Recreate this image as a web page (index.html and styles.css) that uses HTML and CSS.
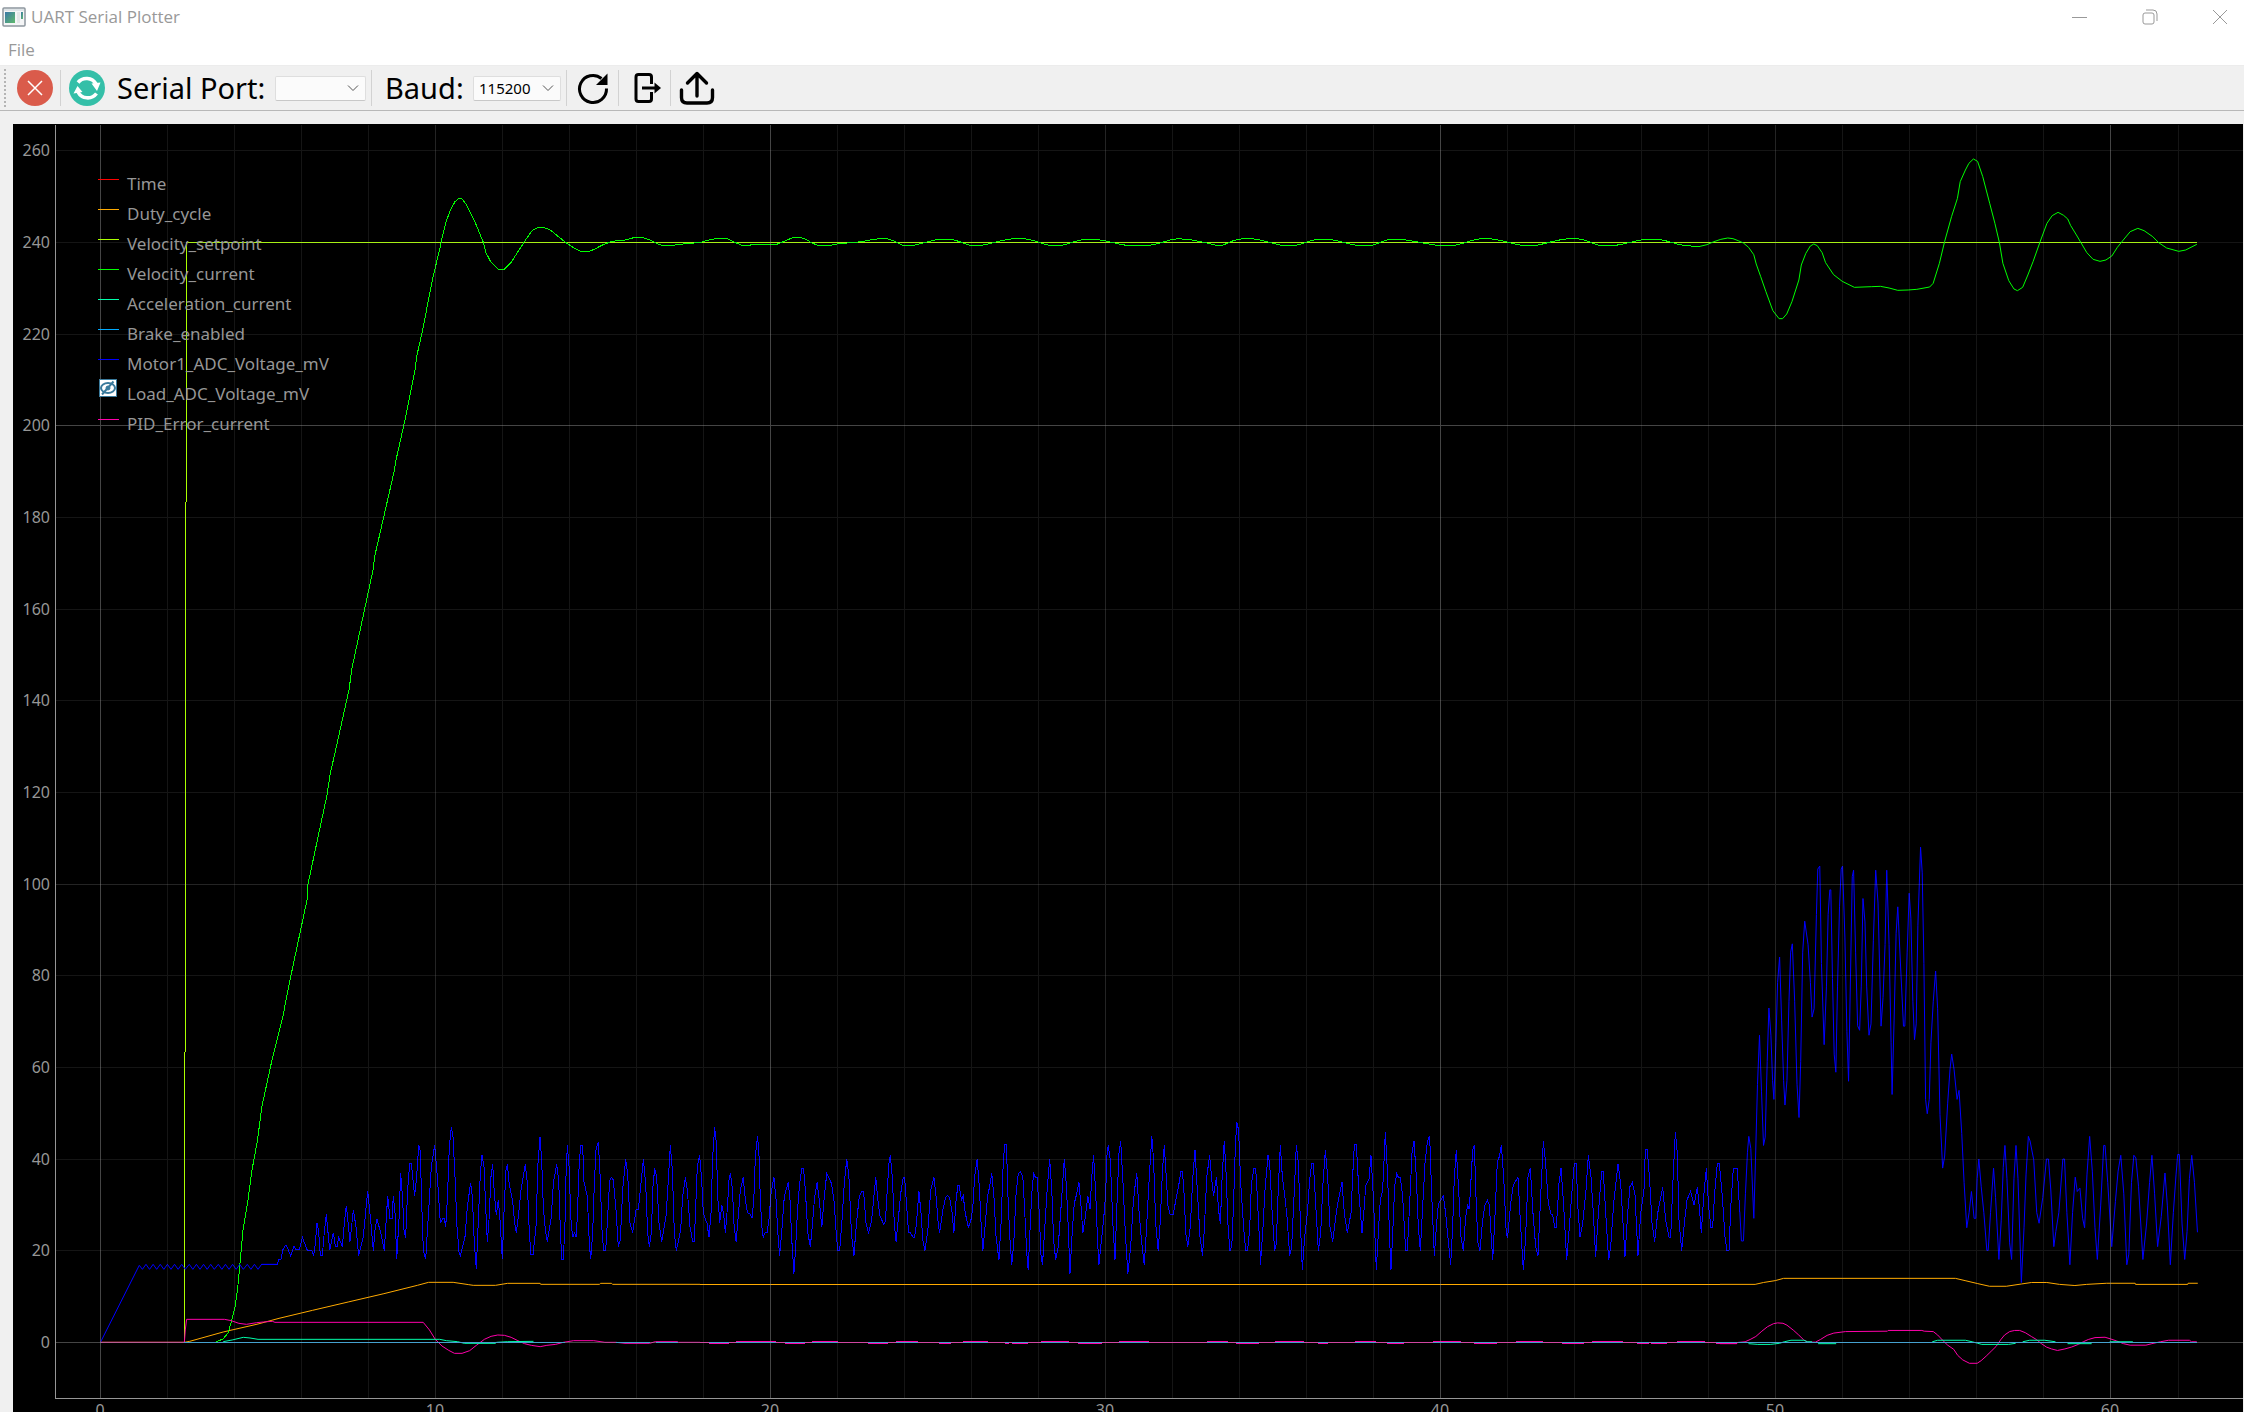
FILE: index.html
```html
<!DOCTYPE html>
<html lang="en">
<head>
<meta charset="utf-8">
<title>UART Serial Plotter</title>
<link rel="stylesheet" href="styles.css">
</head>
<body>
<header class="titlebar">
  <svg class="app-icon" width="24" height="20" viewBox="0 0 24 20" aria-hidden="true">
    <defs><linearGradient id="appfill" x1="0" y1="0" x2="1" y2="1"><stop offset="0" stop-color="#3b78a8"/><stop offset="1" stop-color="#5fba6c"/></linearGradient></defs>
    <rect x="1" y="1" width="22" height="18" rx="1" fill="#f4f5f6" stroke="#8d969e" stroke-width="1.5"/>
    <path d="M2 3h20" stroke="#c9d2d9"/>
    <rect x="3" y="5" width="10" height="11" fill="url(#appfill)"/>
    <rect x="15" y="5" width="3" height="11" fill="#e4e6e8"/>
    <rect x="19" y="5" width="2" height="7" fill="url(#appfill)"/>
  </svg>
  <h1 class="title">UART Serial Plotter</h1>
  <div class="window-controls">
    <button type="button" aria-label="Minimize"><svg width="16" height="16" viewBox="0 0 16 16"><path d="M0 8.5h15"/></svg></button>
    <button type="button" aria-label="Restore"><svg width="16" height="16" viewBox="0 0 16 16"><rect x="1" y="4" width="11" height="11" rx="2"/><path d="M4 1h7q4 0 4 4v7"/></svg></button>
    <button type="button" aria-label="Close"><svg width="16" height="16" viewBox="0 0 16 16"><path d="M1 1l14 14M15 1L1 15"/></svg></button>
  </div>
</header>
<nav class="menubar"><button type="button">File</button></nav>
<div class="toolbar" role="toolbar" aria-label="Connection">
  <span class="grip"></span>
  <button type="button" class="tool" aria-label="Disconnect">
    <svg width="36" height="36" viewBox="0 0 36 36"><circle cx="18" cy="18" r="18" fill="#da5b4b"/><path d="M11 11l14 14M25 11L11 25" stroke="#fff" stroke-width="1.5"/></svg>
  </button>
  <span class="sep"></span>
  <button type="button" class="tool" aria-label="Connect">
    <svg width="36" height="36" viewBox="0 0 36 36"><circle cx="18" cy="18" r="18" fill="#34bfa8"/>
      <path d="M9 12.500A11 11 0 0 1 27 14M27.500 23.500A11 11 0 0 1 9 22" fill="none" stroke="#fff" stroke-width="3.600"/>
      <path d="M22.500 13.500L31.500 12.500 28 21zM4.500 23.500L8.500 16 13.500 22z" fill="#fff"/></svg>
  </button>
  <label class="port-label" for="port">Serial Port:</label>
  <span class="combo port"><select id="port"><option></option></select><svg width="12" height="8" viewBox="0 0 12 8"><path d="M1 1.500l5 5 5-5"/></svg></span>
  <span class="sep near"></span>
  <label class="baud-label" for="baud">Baud:</label>
  <span class="combo baud"><select id="baud"><option>115200</option></select><svg width="12" height="8" viewBox="0 0 12 8"><path d="M1 1.500l5 5 5-5"/></svg></span>
  <span class="sep near"></span>
  <button type="button" class="tool" aria-label="Refresh">
    <svg width="36" height="36" viewBox="0 0 36 36"><path d="M26.500 8.500A13.500 13.500 0 1 0 31.500 18.500" fill="none" stroke="#000" stroke-width="3"/><path d="M32.500 3.500V15H21z" fill="#000"/></svg>
  </button>
  <span class="sep"></span>
  <button type="button" class="tool" aria-label="Export">
    <svg width="36" height="36" viewBox="0 0 36 36"><path d="M24.500 14V7q0-2.500-2.500-2.500H11.500Q9 4.500 9 7v22q0 2.500 2.500 2.500H22q2.500 0 2.500-2.500v-7" fill="none" stroke="#000" stroke-width="3"/><path d="M15 18h14" stroke="#000" stroke-width="3"/><path d="M27.500 12.500l6.500 5.500-6.500 5.500z" fill="#000"/></svg>
  </button>
  <span class="sep"></span>
  <button type="button" class="tool" aria-label="Upload">
    <svg width="36" height="36" viewBox="0 0 36 36"><g fill="none" stroke="#000" stroke-width="3.400" stroke-linecap="round" stroke-linejoin="round"><path d="M2.500 20v7.500q0 5.500 5.500 5.500h20q5.500 0 5.500-5.500V20"/><path d="M18 26V3.500M8.500 13L18 3.500 27.500 13"/></g></svg>
  </button>
</div>
<main class="plot">
<svg class="chart" viewBox="13 124 2230 1288" role="img" aria-label="Serial data plot">
  <g class="trace">
    <!-- Duty_cycle -->
    <g class="duty">
      <polyline transform="matrix(.44643 0 0 .33333 0 1140)" points="225,607 413,607 425,604 500,576 578,552 625,535 700,511 780,486 860,461 935,436 960,427 1015,427 1050,434 1060,436 1110,436 1137,430 1210,430 1211,433 1343,433 1345,430 1370,430 1372,433 1568,433"/>
      <path d="M700 1284.400H1720"/>
      <polyline transform="matrix(.33482 0 0 .37755 1720 820)" points="0,1230 105,1230 130,1225 165,1220 190,1214 703,1214 732,1220 770,1228 805,1235 855,1235 900,1229 930,1225 976,1225 1014,1230 1060,1233 1095,1230 1155,1227 1240,1227 1241,1230 1397,1230 1398,1227 1427,1227"/>
    </g>
    <!-- Velocity_setpoint -->
    <path class="setpoint" d="M100 1342.500H184.500L186.500 242.500H2197"/>
    <!-- Velocity_current -->
    <g class="velocity">
      <polyline points="100,1342.500 215,1342.500 218,1341 223,1339 228,1333 231,1323 235,1307 237.500,1290 240,1263 243,1230 248,1200 252,1170 257.500,1140 262,1106 272,1060 283,1016 286,1000 290,980 307,900 308,884 327,795 330,775 349,690 352,668 373,570 375,555 394,472 396,460 405,420 415,370 417,355 422,333 433,277 440,248"/>
      <polyline transform="matrix(.33333 0 0 .33333 420 180)" points="60,205 68,165 80,120 92,88 105,65 117,55 125,55 140,75 155,105 170,138 190,187 198,218 212,245 235,268 253,268 275,245 295,213 312,187 335,153 350,144 365,142 380,145 395,153 415,170 437,187 460,203 483,214 508,214 525,207 545,196 575,184 615,180 645,172 665,172 690,180 705,188 730,198 750,198 775,193 815,190 845,186 875,178 895,175 920,175 945,187 965,196 985,196 1005,193 1070,193 1095,183 1120,172 1140,172 1160,179 1175,189 1200,198 1220,198 1250,192 1290,188 1325,185 1360,178 1395,175"/>
      <path d="M885 238.500C895 239 898 246 908 246S930 239 945 239 965 246 976 246 1000 238.500 1019 238.500 1042 246 1055 246 1075 239 1090 239 1120 246 1134 246 1155 245 1170 240 1215 246 1220 246 1230 238.500 1247 238.500 1275 246 1289 246 1308 239 1323 239 1350 246 1365 246 1380 239 1395 239 1430 246 1447 246 1468 238.500 1485 238.500 1515 246 1529 246 1555 238.500 1573 238.500 1590 246 1607 246 1635 239 1652 239 1675 246 1691 246L1700 246"/>
      <polyline transform="matrix(.34694 0 0 .33333 1700 120)" points="0,379 20,374 40,365 60,358 80,354 95,356 110,362 125,369 140,382 155,404 162,432 175,470 190,515 210,572 228,596 238,596 250,582 265,545 285,480 292,435 305,400 318,378 328,372 338,377 352,398 362,428 385,464 410,484 445,502 495,500 520,499 545,504 570,511 600,510 625,508 662,501 672,490 690,430 705,365 725,290 742,235 750,185 765,150 775,130 788,117 800,124 815,170 835,250 850,310 863,368 873,430 890,482 905,507 915,512 930,502 945,465 960,425 980,366 1000,310 1015,287 1032,277 1048,286 1060,297 1068,316 1085,345 1098,368 1115,398 1133,418 1153,424 1170,420 1187,408 1203,382 1220,360 1240,335 1262,325 1280,332 1305,350 1322,368 1345,384 1380,394 1400,390 1432,373"/>
    </g>
    <!-- Motor1_ADC_Voltage_mV -->
    <g class="motor">
      <polyline transform="matrix(.44643 0 0 .33333 0 1140)" points="225,607 312,376 319,388 327,373 335,388 343,373 351,388 359,373 367,388 375,373 383,388 391,373 399,388 407,373 415,388 424,373 432,388 440,373 448,388 456,373 464,388 472,373 480,388 489,373 497,388 505,373 513,388 521,373 529,388 537,373 545,388 554,373 562,388 570,373 578,388 586,373 620,373"/>
      <polyline transform="matrix(.33333 0 0 .33333 260 1110)" points="3,463 52,463 57,448 63,448 68,420 75,408 80,408 92,437 102,408 108,420 118,420 127,382 142,421 155,421 161,437 166,400 171,340 176,365 181,437 187,437 193,365 199,313 209,421 220,368 226,410 231,410 236,382 247,410 253,340 259,287 270,395 280,300 288,350 296,437 310,380 323,243 331,320 340,422 345,360 351,327 362,368 373,422 378,340 383,258 390,326 396,326 400,258 406,320 410,448 417,330 422,190 428,270 432,360 437,383 443,240 449,160 454,160 459,210 464,257 470,200 476,106 480,120 484,230 488,380 492,430 497,448 503,350 514,170 524,106 532,200 541,340 548,325 553,325 557,352 562,270 568,110 574,52 579,80 585,200 591,350 597,425 601,437 615,380 622,290 632,218 637,260 643,400 649,478 655,330 661,190 666,136 672,170 677,290 682,395 687,330 693,200 698,163 703,250 709,315 715,270 720,330 727,448 733,280 738,180 742,163 748,225 758,272 764,340 769,368 775,320 783,240 796,163 802,220 808,370 813,435 819,435 828,350 834,160 840,80 845,150 850,290 856,360 862,395 874,320 880,220 890,163 896,210 900,330 905,448 910,448 915,340 918,200 922,106 928,180 932,320 938,382 944,368 949,382 953,290 958,150 963,106 968,106 972,215 982,260 988,400 992,448 998,370 1003,220 1008,120 1015,95 1020,190 1026,360 1031,422 1037,422 1043,320 1049,212 1054,202 1060,210 1068,300 1075,410 1081,390 1088,240 1097,148 1103,190 1110,340 1118,368 1128,300 1135,298 1141,240 1150,148 1157,220 1163,370 1168,410 1174,370 1179,230 1184,175 1190,200 1197,340 1205,395 1218,320 1225,210 1231,106 1237,180 1243,370 1249,422 1262,360 1268,260 1276,202 1282,240 1290,350 1298,395 1303,395 1308,270 1312,170 1319,136 1325,210 1330,310 1341,340 1347,382 1353,310 1358,140 1364,52 1369,100 1373,260 1380,340"/>
      <polyline transform="matrix(.35714 0 0 .33333 700 1080)" points="55,430 61,376 66,400 71,458 77,380 81,300 85,280 91,330 95,430 101,485 107,410 113,330 121,292 127,360 133,398 141,403 146,415 151,350 155,230 161,168 165,220 169,360 173,440 177,471 183,458 188,458 193,420 199,340 207,292 213,360 218,460 223,527 230,440 236,350 247,307 252,360 257,480 263,581 268,500 273,390 279,310 285,265 290,265 295,330 302,460 309,500 315,430 321,350 328,307 335,370 341,442 348,350 355,280 368,310 376,370 382,470 386,512 391,512 397,430 404,310 411,237 417,290 424,460 431,527 438,430 446,350 453,334 458,334 465,430 472,458 480,425 486,360 492,292 498,360 504,408 514,432 519,425 525,320 529,250 533,226 539,300 544,430 549,485 555,420 562,340 569,292 573,292 578,370 584,458 589,458 597,472 601,472 606,430 613,334 619,400 624,480 630,512 638,450 646,330 655,292 661,350 667,430 671,458 680,390 688,352 693,346 699,354 705,390 711,458 717,360 722,318 726,318 732,360 737,348 743,400 751,442 758,425 764,380 769,290 776,237 782,320 788,450 792,512 799,430 805,350 811,320 817,280 823,350 829,470 837,540 843,430 849,250 853,195 858,195 863,370 868,480 873,555 879,480 885,340 891,282 897,276 904,290 909,390 915,520 919,570 924,450 929,340 934,280 939,292 944,292 949,380 955,530 959,555 965,450 972,330 979,237 985,330 990,480 996,540 1003,500 1011,380 1020,237 1026,320 1031,440 1036,581 1042,460 1048,370 1055,340 1061,307 1067,380 1072,458 1079,410 1086,348 1092,388 1097,290 1102,226 1108,340 1113,480 1117,555 1123,490 1130,420 1136,340 1139,230 1143,195 1149,240 1156,430 1162,540 1168,360 1173,220 1178,183 1184,300 1191,460 1198,581 1206,500 1213,370 1218,320 1223,280 1229,390 1236,480 1244,555 1250,450 1257,310 1265,168 1270,240 1276,430 1283,512 1289,420 1295,270 1300,195 1306,300 1310,375 1316,403 1325,403 1332,362 1340,320 1346,276 1351,276 1356,350 1360,460 1366,500 1373,440 1380,290 1386,210 1392,320 1400,470 1407,527 1412,450 1419,290 1427,226 1433,300 1438,347 1446,292 1452,390 1457,432 1462,290 1468,183 1473,280 1479,450 1484,512 1489,500 1494,370 1499,200 1503,126 1508,150 1514,310 1522,440 1528,512 1533,512 1539,450 1544,310 1551,265 1556,265 1560,340 1570,555"/>
      <polyline transform="matrix(.33333 0 0 .33333 1240 1080)" points="61,555 68,460 75,330 84,226 89,250 96,390 104,512 109,490 115,320 121,195 127,290 134,345 141,410 149,527 155,500 163,330 169,195 175,250 182,450 187,570 194,470 202,400 209,300 215,250 220,250 227,370 235,512 242,460 249,310 256,210 263,290 270,440 278,485 286,420 293,370 306,307 313,400 322,458 333,400 339,270 343,195 349,195 357,340 366,460 372,390 377,318 387,297 393,226 400,350 409,570 416,440 421,360 428,330 436,156 443,290 449,480 453,570 459,440 464,320 470,280 475,292 481,292 488,350 497,512 502,512 509,370 516,220 522,183 529,290 535,440 541,512 548,380 555,250 562,185 569,168 575,340 583,527 590,430 595,372 610,348 617,400 625,485 632,555 638,440 643,290 649,210 656,330 663,470 670,512 677,410 683,376 688,388 693,300 698,210 703,195 709,380 714,490 720,512 728,420 735,375 742,360 748,375 758,540 764,430 772,245 778,230 784,195 791,290 799,465 803,472 812,370 820,315 834,292 842,440 850,570 857,470 864,290 871,265 879,400 887,500 894,527 902,350 910,183 917,250 925,370 933,403 938,403 944,442 949,442 957,310 963,265 970,360 980,540 988,440 997,320 1003,250 1009,250 1013,370 1020,472 1028,430 1038,330 1045,226 1053,290 1060,400 1067,530 1075,400 1085,276 1090,276 1096,380 1106,540 1112,500 1121,370 1134,252 1142,310 1155,530 1163,400 1170,320 1177,307 1185,345 1194,527 1202,400 1212,330 1216,210 1222,210 1229,300 1236,430 1244,485 1253,400 1268,322 1277,420 1287,472 1292,472 1299,300 1306,156 1312,220 1317,420 1325,512 1333,430 1341,360 1352,334 1362,375 1372,322 1378,380 1384,458 1391,350 1399,265 1406,380 1413,442 1418,442 1424,340 1432,250 1438,250 1447,350 1455,470 1461,512 1467,512 1473,370 1480,265 1492,265 1499,395"/>
      <polyline transform="matrix(.33482 0 0 .37755 1720 820)" points="59,1037 64,1115 70,1115 76,990 82,880 86,838 92,870 101,1055 106,900 112,700 118,570 124,720 130,862 135,840 141,640 146,498 152,570 157,690 161,740 167,590 172,430 178,363 184,530 190,690 194,755 200,690 206,480 211,350 216,328 223,480 230,700 236,788 241,640 247,350 253,268 263,330 270,430 275,522 281,500 288,250 292,130 298,122 303,380 311,595 318,440 323,250 328,185 331,185 336,420 341,620 346,668 351,440 357,230 362,130 366,122 373,310 379,560 384,692 390,400 395,150 399,133 405,350 411,545 417,557 422,440 427,208 433,270 438,440 445,570 451,540 458,320 465,133 472,220 481,546 487,470 493,330 498,133 505,330 511,590 514,727 520,530 526,300 531,230 540,400 548,546 552,546 559,350 565,194 570,260 576,480 581,582 586,540 591,280 599,72 604,140 609,380 614,740 619,778 625,740 630,590 637,480 644,400 650,500 657,780 665,922 671,890 680,750 687,660 692,620 699,660 708,740 714,716 722,830 729,960 737,1080 744,1040 751,984 759,1055 764,1055 768,950 773,898 780,970 788,1040 797,1140 801,1140 808,1040 817,922 823,1000 833,1164 840,1060 846,920 851,862 857,950 865,1120 871,1164 878,950 884,862 890,950 900,1225 908,1080 914,940 921,838 926,850 937,900 946,1040 953,1068 964,1000 975,898 981,898 988,980 997,1130 1003,1090 1012,1040 1024,898 1029,898 1036,1040 1045,1178 1053,1040 1061,946 1067,984 1075,975 1083,1055 1089,1080 1096,940 1104,838 1112,930 1120,1080 1127,1164 1137,1020 1146,862 1150,862 1158,960 1170,1130 1181,1010 1189,930 1197,888 1206,990 1215,1178 1221,1150 1229,960 1236,888 1242,895 1250,970 1263,1164 1274,1070 1283,960 1290,888 1298,990 1307,1130 1318,1050 1329,935 1336,1020 1345,1178 1354,1040 1362,940 1367,886 1372,886 1380,1070 1388,1164 1395,1090 1402,950 1409,888 1417,960 1426,1092"/>
    </g>
    <!-- PID_Error_current -->
    <g class="pid">
      <polyline transform="matrix(.44643 0 0 .33333 0 1140)" points="225,607 413,607 415,570 418,538 503,538 518,542 535,550 552,553 575,548 590,546 610,544 616,547 948,547 962,570 975,598 990,618 1005,631 1018,640 1035,640 1052,632 1068,615 1085,598 1100,589 1115,585 1130,586 1145,592 1160,602 1175,611 1190,616 1210,620 1225,616 1245,613 1262,607 1285,602 1330,602 1355,607 1380,607 1400,610 1455,610 1468,605 1518,605 1520,607 1568,607"/>
      <path d="M700 1342.500H1740"/>
      <path transform="matrix(.35714 0 0 1 700 0)" d="M101 1341.500H213M314 1341.500H386M549 1341.500H610M736 1341.500H806M955 1341.500H1033M1173 1341.500H1257M1420 1341.500H1478M25 1343.500H81M238 1343.500H294M470 1343.500H526M669 1343.500H703M854 1343.500H865M874 1343.500H918M1058 1343.500H1126M1501 1343.500H1565"/>
      <path transform="matrix(.33333 0 0 1 1240 0)" d="M0 1343.500H57M234 1343.500H264M441 1343.500H492M702 1343.500H771M966 1343.500H1032M1191 1343.500H1227M1233 1343.500H1281M1428 1343.500H1491M105 1341.500H192M345 1341.500H408M579 1341.500H663M828 1341.500H909M1056 1341.500H1149M1311 1341.500H1395"/>
      <polyline transform="matrix(.33482 0 0 .37755 1720 820)" points="0,1387 50,1387 52,1384 75,1382 90,1376 107,1368 125,1354 142,1342 160,1334 172,1332 188,1333 200,1338 220,1352 235,1364 250,1377 262,1383 285,1383 300,1376 320,1365 340,1359 375,1355 500,1354 502,1352 603,1352 610,1354 637,1355 650,1364 665,1378 680,1391 698,1402 710,1418 725,1430 745,1439 768,1439 780,1432 795,1420 810,1407 825,1394 838,1377 850,1364 865,1355 880,1352 895,1352 912,1358 930,1368 945,1376 960,1387 975,1396 990,1401 1008,1405 1030,1401 1050,1396 1070,1389 1085,1382 1100,1376 1120,1371 1150,1370 1165,1374 1185,1380 1205,1387 1225,1391 1272,1391 1290,1387 1315,1382 1340,1378 1402,1378 1408,1382 1424,1382"/>
    </g>
    <!-- Acceleration_current -->
    <g class="accel">
      <polyline transform="matrix(.44643 0 0 .33333 0 1140)" points="500,605 520,600 545,592 560,594 578,598 985,598 1000,602 1025,605 1040,610 1110,610 1112,607 1137,605 1195,604"/>
      <path transform="matrix(.33482 0 0 .37755 1720 820)" d="M85 1387L113 1389H150L178 1386 192 1382 212 1378H250L262 1382H275M293 1387H347M634 1382L650 1378H733L753 1382 770 1386 782 1389H862L883 1386M904 1382L925 1378H970L1002 1382M1038 1387H1110M1164 1382H1233"/>
    </g>
    <!-- Brake_enabled -->
    <g class="brake">
      <path d="M184 1342.500H565M616 1342.500H650M656 1342.500H678M1738 1342.500H2197"/>
      <path transform="matrix(.35714 0 0 1 700 0)" d="M25 1342.500H81M101 1342.500H213M238 1342.500H294M314 1342.500H386M470 1342.500H526M549 1342.500H610M669 1342.500H703M736 1342.500H806M854 1342.500H865M874 1342.500H918M955 1342.500H1033M1058 1342.500H1126M1173 1342.500H1257M1420 1342.500H1478M1501 1342.500H1565"/>
      <path transform="matrix(.33333 0 0 1 1240 0)" d="M0 1342.500H57M105 1342.500H192M234 1342.500H264M345 1342.500H408M441 1342.500H492M579 1342.500H663M702 1342.500H771M828 1342.500H909M966 1342.500H1032M1056 1342.500H1149M1191 1342.500H1227M1233 1342.500H1281M1311 1342.500H1395M1428 1342.500H1491"/>
    </g>
  </g>
  <g class="grid">
    <path class="minor" d="M167.500 125V1398M234.500 125V1398M301.500 125V1398M368.500 125V1398M502.500 125V1398M569.500 125V1398M636.500 125V1398M703.500 125V1398M837.500 125V1398M904.500 125V1398M971.500 125V1398M1038.500 125V1398M1172.500 125V1398M1239.500 125V1398M1306.500 125V1398M1373.500 125V1398M1507.500 125V1398M1574.500 125V1398M1641.500 125V1398M1708.500 125V1398M1842.500 125V1398M1909.500 125V1398M1976.500 125V1398M2043.500 125V1398M2178.500 125V1398M56 150.500H2243M56 242.500H2243M56 334.500H2243M56 517.500H2243M56 609.500H2243M56 700.500H2243M56 792.500H2243M56 975.500H2243M56 1067.500H2243M56 1159.500H2243M56 1250.500H2243"/>
    <path class="mid" d="M435.500 125V1398M1105.500 125V1398M1775.500 125V1398M56 884.500H2243"/>
    <path class="major" d="M100.500 125V1398M770.500 125V1398M1440.500 125V1398M2110.500 125V1398M56 425.500H2243M56 1342.500H2243"/>
    <path class="axis" d="M55.500 125V1398.500H2243"/>
  </g>
  <g class="ticks y-ticks">
    <text x="50" y="156">260</text><text x="50" y="248">240</text><text x="50" y="340">220</text><text x="50" y="431">200</text><text x="50" y="523">180</text><text x="50" y="615">160</text><text x="50" y="706">140</text><text x="50" y="798">120</text><text x="50" y="890">100</text><text x="50" y="981">80</text><text x="50" y="1073">60</text><text x="50" y="1165">40</text><text x="50" y="1256">20</text><text x="50" y="1348">0</text>
  </g>
  <g class="ticks x-ticks">
    <text x="100" y="1416">0</text><text x="435" y="1416">10</text><text x="770" y="1416">20</text><text x="1105" y="1416">30</text><text x="1440" y="1416">40</text><text x="1775" y="1416">50</text><text x="2110" y="1416">60</text>
  </g>
  <g class="trace">
    <path class="time" d="M98 179.500h21"/>
    <path class="duty" d="M98 209.500h21"/>
    <path class="setpoint" d="M98 239.500h21"/>
    <path class="velocity" d="M98 269.500h21"/>
    <path class="accel" d="M98 299.500h21"/>
    <path class="brake" d="M98 329.500h21"/>
    <path class="motor" d="M98 359.500h21"/>
    <path class="pid" d="M98 419.500h21"/>
  </g>
  <g class="hidden-mark">
    <rect x="99.500" y="379.500" width="17" height="17"/>
    <ellipse cx="108" cy="388" rx="7" ry="5"/>
    <circle cx="108" cy="388" r="2"/>
    <path d="M102 394.500L113.500 381.500"/>
  </g>
  <g class="legend">
    <text x="127" y="190">Time</text>
    <text x="127" y="220">Duty_cycle</text>
    <text x="127" y="250">Velocity_setpoint</text>
    <text x="127" y="280">Velocity_current</text>
    <text x="127" y="310">Acceleration_current</text>
    <text x="127" y="340">Brake_enabled</text>
    <text x="127" y="370">Motor1_ADC_Voltage_mV</text>
    <text x="127" y="400">Load_ADC_Voltage_mV</text>
    <text x="127" y="430">PID_Error_current</text>
  </g>
</svg>
</main>
</body>
</html>
```
FILE: styles.css
```css
* { box-sizing: border-box; }

body {
  margin: 0;
  height: 100vh;
  overflow: hidden;
  background: #f0f0f0;
  color: #000;
  font-family: "Noto Sans", "Open Sans", sans-serif;
}

button {
  padding: 0;
  border: 0;
  background: none;
  font: inherit;
  color: inherit;
}

svg { display: block; }

.titlebar {
  display: flex;
  align-items: center;
  height: 34px;
  padding-left: 2px;
  background: #fff;
  color: #999;
}

.title {
  flex: 1;
  margin: 0 0 0 5px;
  font: 400 17px/24px "Open Sans", "Noto Sans", sans-serif;
}

.window-controls {
  display: flex;
  gap: 54px;
  padding-right: 16px;
}

.window-controls svg {
  fill: none;
  stroke: #999;
  stroke-width: 1;
}

.menubar {
  height: 32px;
  padding-left: 8px;
  border-bottom: 1px solid #ececec;
  background: #fff;
  color: #999;
  font: 400 17px/32px "Open Sans", "Noto Sans", sans-serif;
}

.toolbar {
  display: flex;
  align-items: center;
  height: 45px;
  padding-left: 4px;
  border-bottom: 1px solid #b8b8b8;
}

.grip {
  width: 2px;
  height: 38px;
  margin-right: 11px;
  background: repeating-linear-gradient(#b4b4b4 0 2px, transparent 2px 4px);
}

.sep {
  width: 1px;
  height: 36px;
  margin: 0 8px 0 7px;
  background: #d2d2d2;
}

.sep.near { margin-left: 5px; }

.port-label,
.baud-label {
  font-size: 29px;
  line-height: 36px;
  white-space: nowrap;
}

.port-label {
  min-width: 158px;
  margin-left: 12px;
}

.baud-label {
  min-width: 88px;
  margin-left: 5px;
}

.combo {
  display: grid;
  align-items: center;
  height: 25px;
}

.port { width: 91px; }
.baud { width: 88px; }

.combo select,
.combo svg { grid-area: 1 / 1; }

.combo select {
  width: 100%;
  height: 25px;
  padding: 0 0 0 5px;
  border: 1px solid #dedede;
  border-bottom-color: #c8c8c8;
  border-radius: 2px;
  background: #fbfbfb;
  color: #000;
  font: 400 15px/20px "Noto Sans", sans-serif;
  appearance: none;
}

.combo svg {
  justify-self: end;
  margin-right: 7px;
  fill: none;
  stroke: #555;
  pointer-events: none;
}

.plot { padding: 13px 1px 0 13px; }

.chart {
  width: 100%;
  background: #000;
}

.trace,
.grid {
  fill: none;
  stroke-width: 1;
  shape-rendering: crispEdges;
}

.trace path,
.trace polyline { vector-effect: non-scaling-stroke; }

.time { stroke: #f00; }
.duty { stroke: #fa0; }
.setpoint { stroke: #af0; }
.velocity { stroke: #0f0; }
.accel { stroke: #0fa; }
.brake { stroke: #0af; }
.motor { stroke: #00f; }
.pid { stroke: #f0a; }

.minor { stroke: rgba(150, 150, 150, .14); }
.mid { stroke: rgba(150, 150, 150, .24); }
.major { stroke: rgba(150, 150, 150, .46); }
.axis { stroke: #969696; }

.ticks,
.legend { fill: #969696; }

.ticks { font-size: 16px; }
.y-ticks { text-anchor: end; }
.x-ticks { text-anchor: middle; }
.legend { font-size: 17px; }

.hidden-mark {
  fill: none;
  stroke: #3a7a9c;
}

.hidden-mark rect { fill: #fff; }
.hidden-mark ellipse { stroke-width: 2; }
.hidden-mark circle { fill: #3a7a9c; }
.hidden-mark path { stroke-width: 2; }
```
